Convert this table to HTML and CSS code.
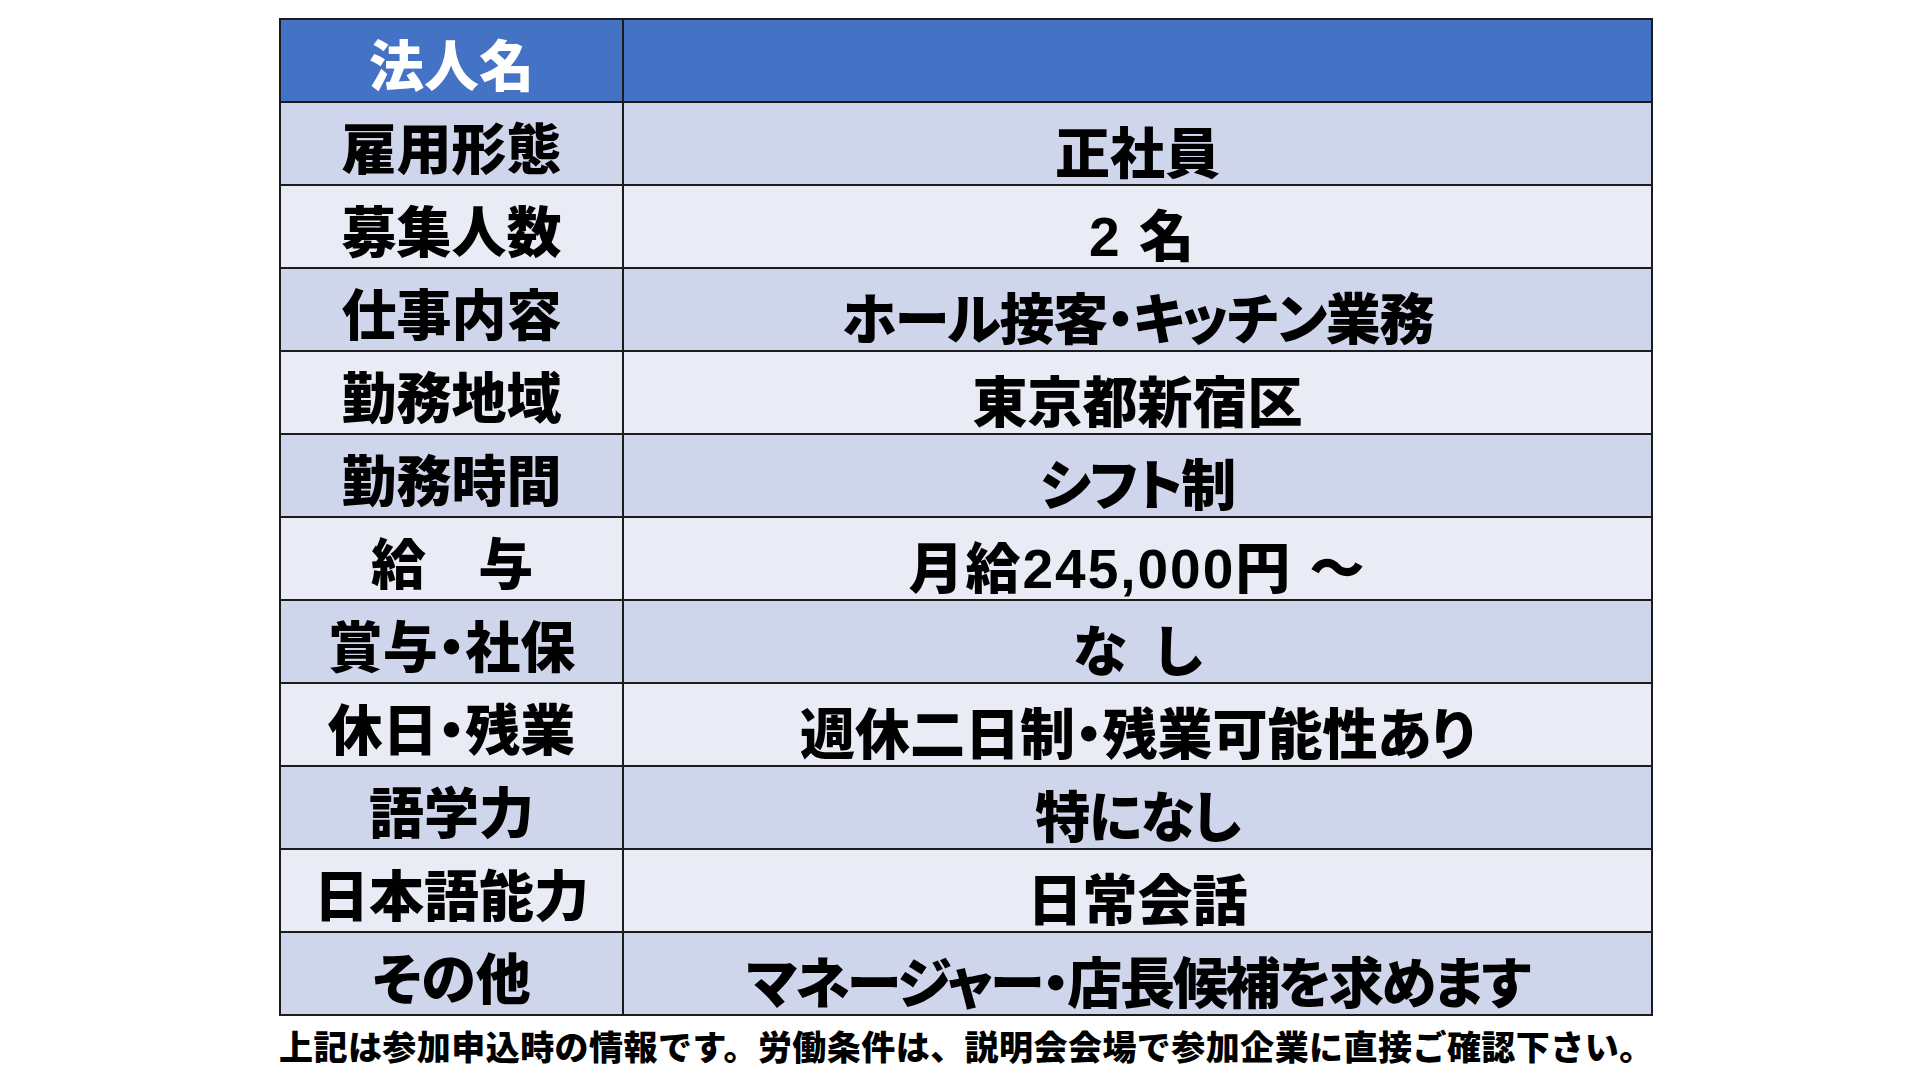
FILE: index.html
```html
<!DOCTYPE html>
<html lang="ja">
<head>
<meta charset="utf-8">
<title>求人情報</title>
<link rel="stylesheet" href="styles.css">
</head>
<body>
<main class="slide">
  <table class="job">
    <colgroup><col class="c-label"><col class="c-value"></colgroup>
    <tr class="head"><th class="label">法人名</th><td class="value"></td></tr>
    <tr class="odd"><th class="label">雇用形態</th><td class="value">正社員</td></tr>
    <tr class="even"><th class="label">募集人数</th><td class="value gap">2 名</td></tr>
    <tr class="odd"><th class="label">仕事内容</th><td class="value tight-s">ホール接客・キッチン業務</td></tr>
    <tr class="even"><th class="label">勤務地域</th><td class="value">東京都新宿区</td></tr>
    <tr class="odd"><th class="label">勤務時間</th><td class="value tight-s">シフト制</td></tr>
    <tr class="even"><th class="label tight-s">給　与</th><td class="value wide">月給245,000円 〜</td></tr>
    <tr class="odd"><th class="label">賞与・社保</th><td class="value">な&ensp;し</td></tr>
    <tr class="even"><th class="label">休日・残業</th><td class="value">週休二日制・残業可能性あり</td></tr>
    <tr class="odd"><th class="label">語学力</th><td class="value tight-s">特になし</td></tr>
    <tr class="even"><th class="label">日本語能力</th><td class="value">日常会話</td></tr>
    <tr class="odd"><th class="label">その他</th><td class="value tight">マネージャー・店長候補を求めます</td></tr>
  </table>
  <p class="note">上記は参加申込時の情報です。労働条件は、説明会会場で参加企業に直接ご確認下さい。</p>
</main>
</body>
</html>
```
FILE: styles.css
```css
html, body {
  margin: 0;
  padding: 0;
  background: #ffffff;
}

body {
  width: 1920px;
  height: 1080px;
  overflow: hidden;
  font-family: "Liberation Sans", "Noto Sans CJK JP", sans-serif;
  color: #000000;
}

.slide {
  padding: 18px 0 0 279px;
}

.job {
  border-collapse: collapse;
  width: 1374px;
  table-layout: fixed;
  border: 2px solid #1c1c1c;
}

.c-label { width: 343px; }

.job tr {
  height: 83px;
}

.job th,
.job td {
  border: 2px solid #1c1c1c;
  padding: 0;
  text-align: center;
  vertical-align: middle;
  font-size: 55px;
  line-height: 55px;
  font-weight: 900;
  font-feature-settings: "palt";
  white-space: nowrap;
}

.job .label {
  padding-top: 13px;
}

.job .value {
  padding-top: 21px;
}

.job .tight {
  letter-spacing: -2.2px;
}

.job .tight-s {
  letter-spacing: -1.4px;
}

.job .wide {
  letter-spacing: 2px;
}

.job .gap {
  letter-spacing: 2px;
  padding-left: 10px;
}

.head {
  background: #4472c4;
}

.head .label {
  color: #ffffff;
}

.odd {
  background: #cfd5ea;
}

.even {
  background: #e9ebf5;
}

.note {
  margin: 5px 0 0 0;
  font-size: 34px;
  line-height: 49px;
  font-weight: 900;
  letter-spacing: 0.45px;
  font-family: "Noto Sans CJK JP", sans-serif;
  white-space: nowrap;
}
```
